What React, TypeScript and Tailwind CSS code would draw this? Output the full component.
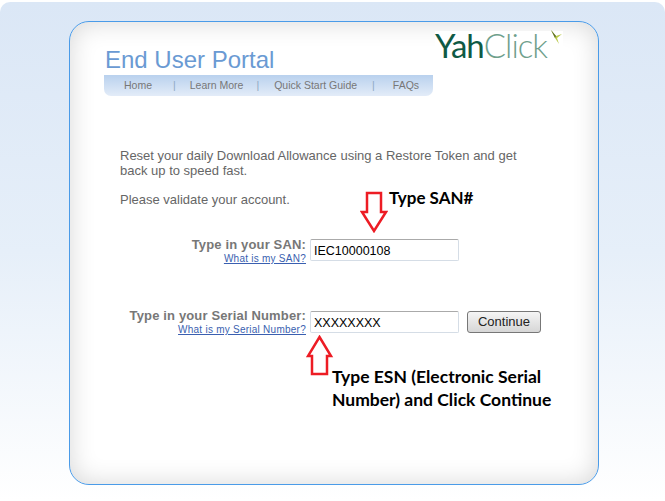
const navItems = ['Home', 'Learn More', 'Quick Start Guide', 'FAQs']

function Arrow({ up, className }: { up?: boolean; className: string }) {
  return (
    <svg width="28" height="42" viewBox="0 0 28 42" className={className}>
      <path
        d={up ? 'M13.5 2 L25 21 L21 21 L21 39 L6 39 L6 21 L2 21 Z' : 'M7 2 L21 2 L21 21 L26 21 L14 40 L2 21 L7 21 Z'}
        fill="#fff"
        stroke="#ed1c24"
        strokeWidth="2.5"
      />
    </svg>
  )
}

function Field({ label, help, value, lower, children }: { label: string; help: string; value: string; lower?: boolean; children?: React.ReactNode }) {
  return (
    <div className="flex items-start">
      <div className="w-[186px] text-right whitespace-nowrap">
        <div className="text-[13px] leading-[16px] font-bold tracking-[0.15px] text-[#777]">{label}</div>
        <a className="block text-[10px] leading-[12px] tracking-[0.25px] text-[#3a5fb0] underline">{help}</a>
      </div>
      <input
        readOnly
        value={value}
        className={`${lower ? 'mt-[3px]' : 'mt-[2px]'} ml-[4px] h-[22px] w-[149px] rounded-[2px] border border-[#d5dde6] border-t-[#aaa] bg-white px-[3px] pt-[1px] text-[12.5px] text-black outline-none`}
      />
      {children}
    </div>
  )
}

export default function App() {
  return (
    <div className="h-[501px] w-[665px] overflow-hidden bg-white pt-[2px] font-['Liberation_Sans',Arial,sans-serif]">
      <div className="h-[499px] rounded-t-[10px] bg-gradient-to-b from-[#dbe7f6] via-[#e6eff9] via-50% to-white pt-[19px] pl-[69px]">
        <div className="relative h-[464px] w-[530px] rounded-[20px] border border-[#4a9be8] bg-white px-[35px] pt-[23px] shadow-[inset_0_0_26px_rgba(0,0,0,0.16)]">
          <div className="flex items-start justify-between">
            <h1 className="text-[24px] leading-[30px] font-normal text-[#6a9ad3]">End User Portal</h1>
            <div className="relative -mt-[14px] flex h-[27px] items-start bg-white pr-[16px] font-['Lato',sans-serif] text-[33px] leading-[29px] tracking-[-1px] text-[#0f5a45]">
              <span className="font-normal">Yah</span>
              <span className="font-light text-[#6fa08c]">Click</span>
              <svg width="14" height="15" viewBox="0 0 14 15" className="absolute top-[-1px] right-0">
                <path d="M2 0 L7 6 L13 4 L8 8 L10 14 L6 8 Z" fill="#b9c94a" />
                <path d="M2 0 L7 6 L6 8 Z" fill="#5f6f2a" />
              </svg>
            </div>
          </div>
          <nav className="-ml-px flex h-[21px] w-[329px] items-center rounded-b-[7px] bg-gradient-to-b from-[#b9d1ee] to-[#e3ecf8] text-[10.5px] whitespace-nowrap text-[#777]">
            {navItems.map((item, i) => (
              <div key={item} className="flex items-center">
                {i > 0 && <span className="text-[#8fa8c4]">|</span>}
                <span className={['mr-[21px] ml-[20px]', 'mr-[13px] ml-[14px]', 'mr-[15px] ml-[15px]', 'ml-[18px]'][i]}>{item}</span>
              </div>
            ))}
          </nav>
          <div className="mt-[52px] ml-[15px] w-[410px] text-[13px] leading-[15px] text-[#666]">
            <p>Reset your daily Download Allowance using a Restore Token and get back up to speed fast.</p>
            <p className="mt-[14px]">Please validate your account.</p>
          </div>
          <div className="mt-[30px] ml-[15px] flex flex-col gap-[43px]">
            <Field label="Type in your SAN:" help="What is my SAN?" value="IEC10000108" />
            <Field lower label="Type in your Serial Number:" help="What is my Serial Number?" value="XXXXXXXX">
              <button className="mt-[3px] ml-[8px] h-[22px] w-[74px] rounded-[3px] border border-[#777] bg-gradient-to-b from-[#f5f5f5] to-[#d6d6d6] text-[13px] text-[#222]">
                Continue
              </button>
            </Field>
          </div>

          {/* red annotations pasted over the form */}
          <Arrow className="absolute top-[169px] left-[290px]" />
          <div className="absolute top-[164px] left-[319px] font-['Lato',sans-serif] text-[17px] leading-[24px] font-bold text-black">Type SAN#</div>
          <Arrow up className="absolute top-[313px] left-[236px]" />
          <div className="absolute top-[343px] left-[262px] w-[240px] font-['Lato',sans-serif] text-[17.5px] leading-[23px] font-bold text-black">
            Type ESN (Electronic Serial Number) and Click Continue
          </div>
        </div>
      </div>
    </div>
  )
}
